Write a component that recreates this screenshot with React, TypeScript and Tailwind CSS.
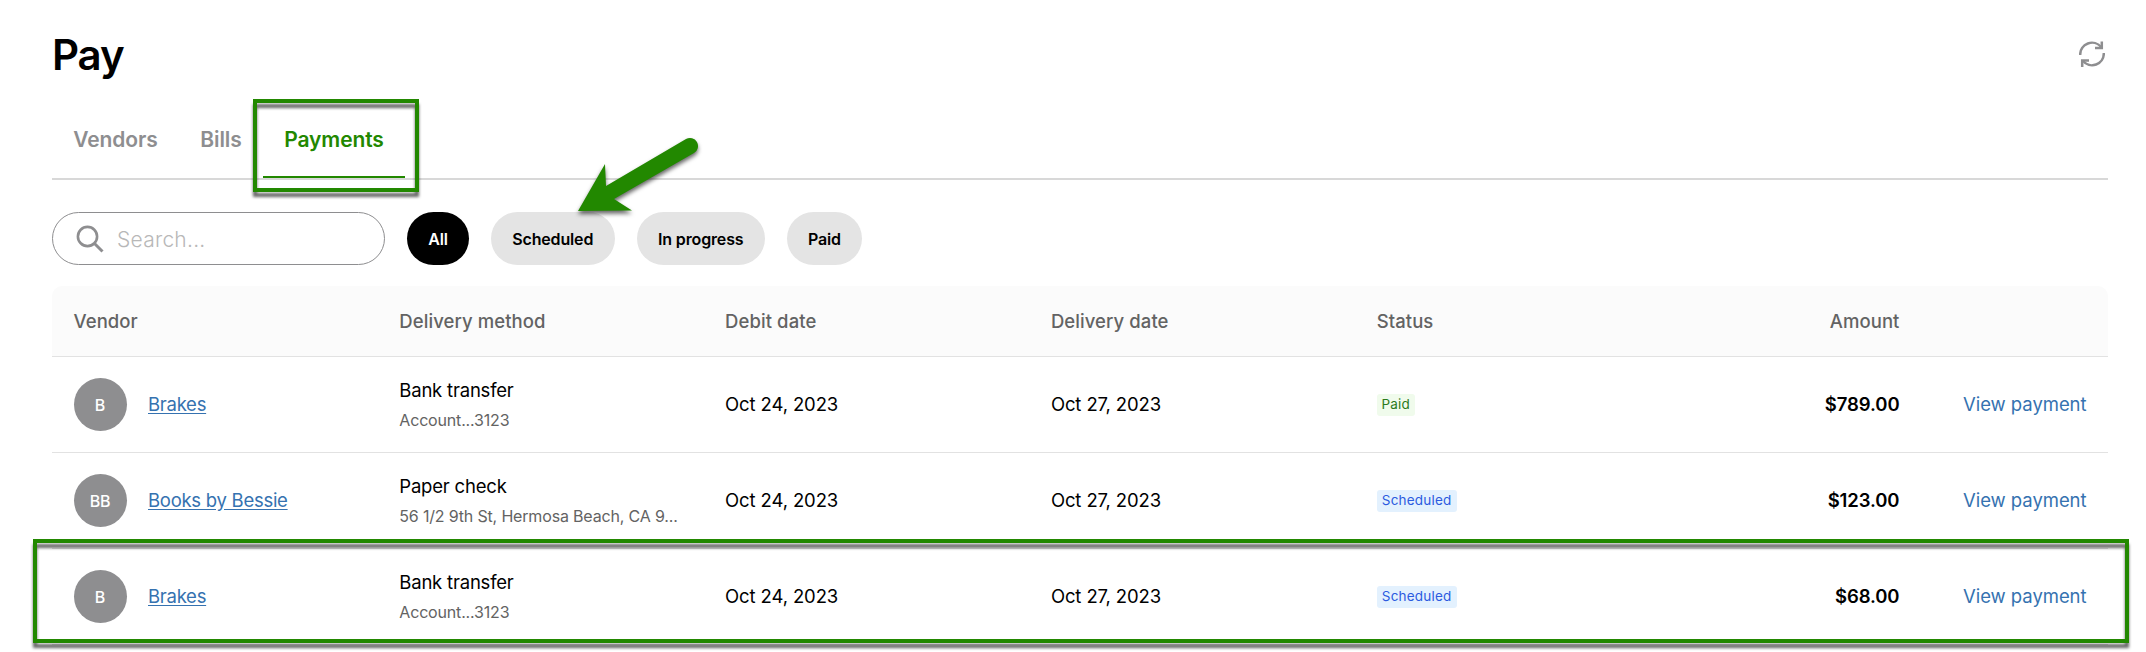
import { useState } from "react";

const tabs = [
  { name: "Vendors", width: "w-[127px]" },
  { name: "Bills", width: "w-[84px]" },
  { name: "Payments", width: "w-[142px]" },
];

const filters = [
  { name: "All", width: "w-[62px]" },
  { name: "Scheduled", width: "w-[123.5px]" },
  { name: "In progress", width: "w-[128.5px]" },
  { name: "Paid", width: "w-[75px]" },
];

const payments = [
  {
    initials: "B",
    vendor: "Brakes",
    method: "Bank transfer",
    detail: "Account...3123",
    debitDate: "Oct 24, 2023",
    deliveryDate: "Oct 27, 2023",
    status: "Paid",
    amount: "$789.00",
  },
  {
    initials: "BB",
    vendor: "Books by Bessie",
    method: "Paper check",
    detail: "56 1/2 9th St, Hermosa Beach, CA 9...",
    debitDate: "Oct 24, 2023",
    deliveryDate: "Oct 27, 2023",
    status: "Scheduled",
    amount: "$123.00",
  },
  {
    initials: "B",
    vendor: "Brakes",
    method: "Bank transfer",
    detail: "Account...3123",
    debitDate: "Oct 24, 2023",
    deliveryDate: "Oct 27, 2023",
    status: "Scheduled",
    amount: "$68.00",
  },
];

const columns = "grid grid-cols-[repeat(5,325.8px)_240px_1fr] items-center";

const RefreshIcon = () => (
  <svg viewBox="0 0 26 26" className="h-[26px] w-[26px]" fill="none" stroke="#8e8e90" strokeWidth="2.5">
    <path d="M1.2 14A11.8 11.8 0 0 1 22.2 6.2" />
    <path d="M22.8 0.4V7H16" />
    <path d="M24.8 12A11.8 11.8 0 0 1 3.8 19.8" />
    <path d="M3.2 26V19.4H10" />
  </svg>
);

const SearchIcon = () => (
  <svg viewBox="0 0 28 28" className="h-7 w-7" fill="none" stroke="#8e8e90" strokeWidth="2.6">
    <circle cx="11.5" cy="11.5" r="9.6" />
    <path d="M18.5 18.5L26.5 26.5" strokeWidth="3" />
  </svg>
);

const StatusBadge = ({ status }: { status: string }) => (
  <span
    className={`inline-flex h-[22px] items-center justify-center rounded-[3px] text-[13.5px] tracking-[0.2px] ${
      status === "Paid" ? "w-[38px] bg-[#f0fbec] text-[#2b7a1c]" : "w-[80px] bg-[#e3f1fe] text-[#2c5be0]"
    }`}
  >
    {status}
  </span>
);

const App = () => {
  const [activeTab, setActiveTab] = useState("Payments");
  const [activeFilter, setActiveFilter] = useState("All");

  return (
    <div className="relative h-[652px] w-[2146px] overflow-hidden bg-white pr-[38px] pl-[52px] font-['Inter',sans-serif] text-black">
      {/* Header */}
      <header className="flex h-[115px] items-start justify-between pr-[3px]">
        <h1 className="pt-[30px] text-[42px] leading-[50px] font-semibold tracking-[-1.1px]">Pay</h1>
        <button className="mt-[41px]" aria-label="Refresh">
          <RefreshIcon />
        </button>
      </header>

      {/* Tabs */}
      <nav className="flex h-[65px] border-b-2 border-[#d8d8d8]">
        {tabs.map((tab) => (
          <button
            key={tab.name}
            onClick={() => setActiveTab(tab.name)}
            className={`flex h-[63px] justify-center border-b-2 pt-[10px] text-[21px] leading-[30px] font-semibold tracking-[-0.1px] ${tab.width} ${
              activeTab === tab.name ? "border-[#228800] text-[#228800]" : "border-transparent text-[#8e8e90]"
            }`}
          >
            {tab.name}
          </button>
        ))}
      </nav>

      {/* Search and filters */}
      <div className="mt-8 flex gap-[22px]">
        <div className="flex h-[53px] w-[333px] items-center rounded-full border border-[#8e8e90] pl-[23px]">
          <SearchIcon />
          <input
            placeholder="Search..."
            className="ml-[13px] w-[200px] pt-[2px] text-[21px] font-light tracking-[0.25px] outline-none placeholder:text-[#b8b8b8]"
          />
        </div>
        {filters.map((filter) => (
          <button
            key={filter.name}
            onClick={() => setActiveFilter(filter.name)}
            className={`h-[53px] rounded-full text-[16px] font-semibold tracking-[-0.15px] whitespace-nowrap ${filter.width} ${
              activeFilter === filter.name ? "bg-black text-white" : "bg-[#e4e4e4]"
            }`}
          >
            {filter.name}
          </button>
        ))}
      </div>

      {/* Payments table */}
      <div className="mt-[21px] text-[18.5px] tracking-[-0.2px]">
        <div
          className={`${columns} h-[71px] rounded-t-[10px] border-b border-[#e2e2e2] bg-[#fbfbfb] pt-[2px] font-medium tracking-[0.08px] text-[#636363] *:px-[21.5px]`}
        >
          <div>Vendor</div>
          <div>Delivery method</div>
          <div>Debit date</div>
          <div>Delivery date</div>
          <div>Status</div>
          <div className="text-right">Amount</div>
        </div>
        {payments.map((payment, index) => (
          <div key={index} className={`${columns} h-24 border-b border-[#e2e2e2] *:px-[21.5px]`}>
            <div className="flex items-center">
              <span className="flex h-[53px] w-[53px] items-center justify-center rounded-full bg-[#8e8e90] text-[16px] font-medium text-white">
                {payment.initials}
              </span>
              <a href="#" className="ml-[21.5px] tracking-[-0.27px] text-[#3572b0] underline underline-offset-2">
                {payment.vendor}
              </a>
            </div>
            <div className="whitespace-nowrap">
              <div className="leading-7">{payment.method}</div>
              <div className="mt-[2px] text-[16px] leading-7 tracking-[-0.17px] text-[#636363]">{payment.detail}</div>
            </div>
            <div className="tracking-[-0.12px]">{payment.debitDate}</div>
            <div className="tracking-[-0.12px]">{payment.deliveryDate}</div>
            <div className="flex">
              <StatusBadge status={payment.status} />
            </div>
            <div className="text-right font-semibold tracking-[-0.1px]">{payment.amount}</div>
            <a href="#" className="text-right tracking-[-0.05px] whitespace-nowrap text-[#3572b0]">
              View payment
            </a>
          </div>
        ))}
      </div>

      {/* Highlights */}
      <div className="pointer-events-none absolute top-[99px] left-[253px] h-[93px] w-[166px] border-[4px] border-[#228800] drop-shadow-[0_5px_1.5px_rgba(0,0,0,0.6)]" />
      <div className="pointer-events-none absolute top-[539px] left-[33px] h-[104px] w-[2096px] border-[4px] border-[#228800] drop-shadow-[0_5px_1.5px_rgba(0,0,0,0.6)]" />
      <svg
        viewBox="0 0 130 84"
        className="pointer-events-none absolute top-[132px] left-[573px] h-[84px] w-[130px] overflow-visible drop-shadow-[0_3px_2px_rgba(0,0,0,0.6)]"
        fill="#228800"
      >
        <path d="M5 79L32 32L33 54L113 7.1A8 8 0 0 1 121 21L41 67L59 78.5Z" />
      </svg>
    </div>
  );
};

export default App;
